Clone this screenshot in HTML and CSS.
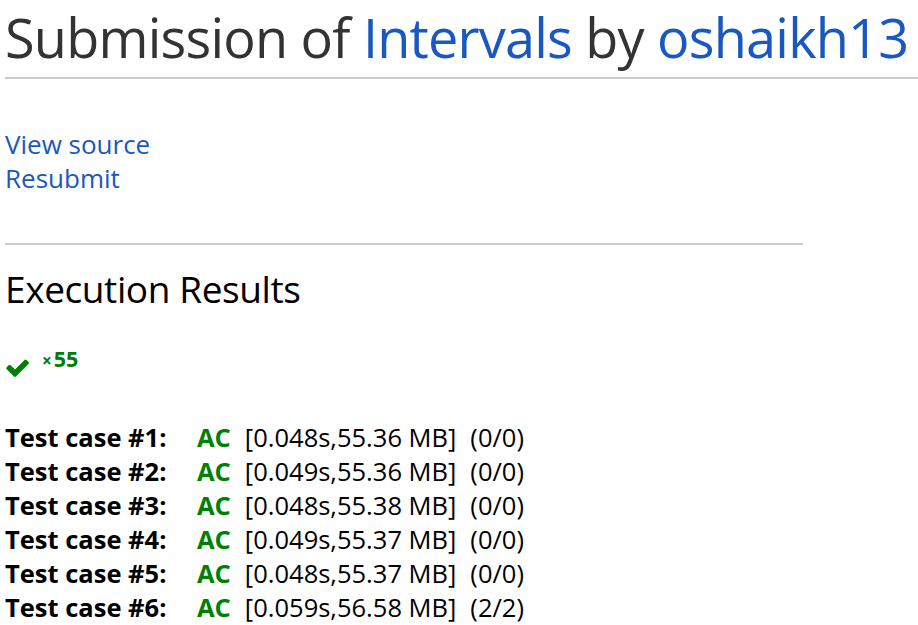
FILE: index.html
```html
<!DOCTYPE html>
<html>
<head>
<meta charset="utf-8">
<link rel="stylesheet" href="styles.css">
</head>
<body>
<div class="page">
  <h1 class="title">Submission of <a href="#">Intervals</a> by <a href="#">oshaikh13</a></h1>
  <hr class="rule-full">
  <div class="links">
    <a href="#">View source</a>
    <a href="#">Resubmit</a>
  </div>
  <hr class="rule-short">
  <h2 class="section">Execution Results</h2>
  <div class="summary">
    <svg class="check" viewBox="109 294 1562 1230" width="23" height="18"><path fill="#008000" d="M1671 566q0 40-28 68l-724 724-136 136q-28 28-68 28t-68-28l-136-136-362-362q-28-28-28-68t28-68l136-136q28-28 68-28t68 28l294 295 656-657q28-28 68-28t68 28l136 136q28 28 28 68z"/></svg>
    <span class="count"><span class="times">×</span>55</span>
  </div>
  <div class="cases">
    <div class="case"><span class="label">Test case #1:</span><span class="ac">AC</span><span class="info">[0.048s,55.36 MB]</span><span class="pts">(0/0)</span></div>
    <div class="case"><span class="label">Test case #2:</span><span class="ac">AC</span><span class="info">[0.049s,55.36 MB]</span><span class="pts">(0/0)</span></div>
    <div class="case"><span class="label">Test case #3:</span><span class="ac">AC</span><span class="info">[0.048s,55.38 MB]</span><span class="pts">(0/0)</span></div>
    <div class="case"><span class="label">Test case #4:</span><span class="ac">AC</span><span class="info">[0.049s,55.37 MB]</span><span class="pts">(0/0)</span></div>
    <div class="case"><span class="label">Test case #5:</span><span class="ac">AC</span><span class="info">[0.048s,55.37 MB]</span><span class="pts">(0/0)</span></div>
    <div class="case"><span class="label">Test case #6:</span><span class="ac">AC</span><span class="info">[0.059s,56.58 MB]</span><span class="pts">(2/2)</span></div>
  </div>
</div>
</body>
</html>
```
FILE: styles.css
```css
html, body { margin: 0; padding: 0; background: #fff; }
body { font-family: "Open Sans", "Noto Sans", sans-serif; color: #000; }
a { color: #1958c1; text-decoration: none; }
.page { padding-left: 5px; }
.title {
  margin: 0;
  font-weight: 400;
  font-size: 54px;
  line-height: 74px;
  color: #333;
  letter-spacing: -0.78px;
  white-space: nowrap;
}
.rule-full { margin: 3px 0 0 0; border: 0; border-top: 2px solid #ccc; }
.links { display: flex; flex-direction: column; align-items: flex-start; margin-top: 48px; font-size: 26px; line-height: 34px; }
.rule-short { margin: 48px 0 0 0; width: 798px; border: 0; border-top: 2px solid #ccc; }
.section { margin: 19px 0 0 0; font-weight: 400; font-size: 37px; line-height: 50px; letter-spacing: -0.4px; }
.summary { display: flex; align-items: flex-start; gap: 13px; margin-top: 33px; height: 30px; }
.check { margin-top: 12px; margin-left: 1px; }
.count { color: #008000; font-weight: 700; font-size: 21.5px; line-height: 24px; }
.times { font-size: 17px; font-weight: 700; margin-right: 2px; }
.cases { margin-top: 43px; }
.case { display: flex; font-size: 25.5px; line-height: 34px; white-space: nowrap; }
.label { font-weight: 700; width: 192px; flex: none; }
.ac { color: #008000; font-weight: 700; margin-right: 14px; }
.info { margin-right: 14px; }
```
